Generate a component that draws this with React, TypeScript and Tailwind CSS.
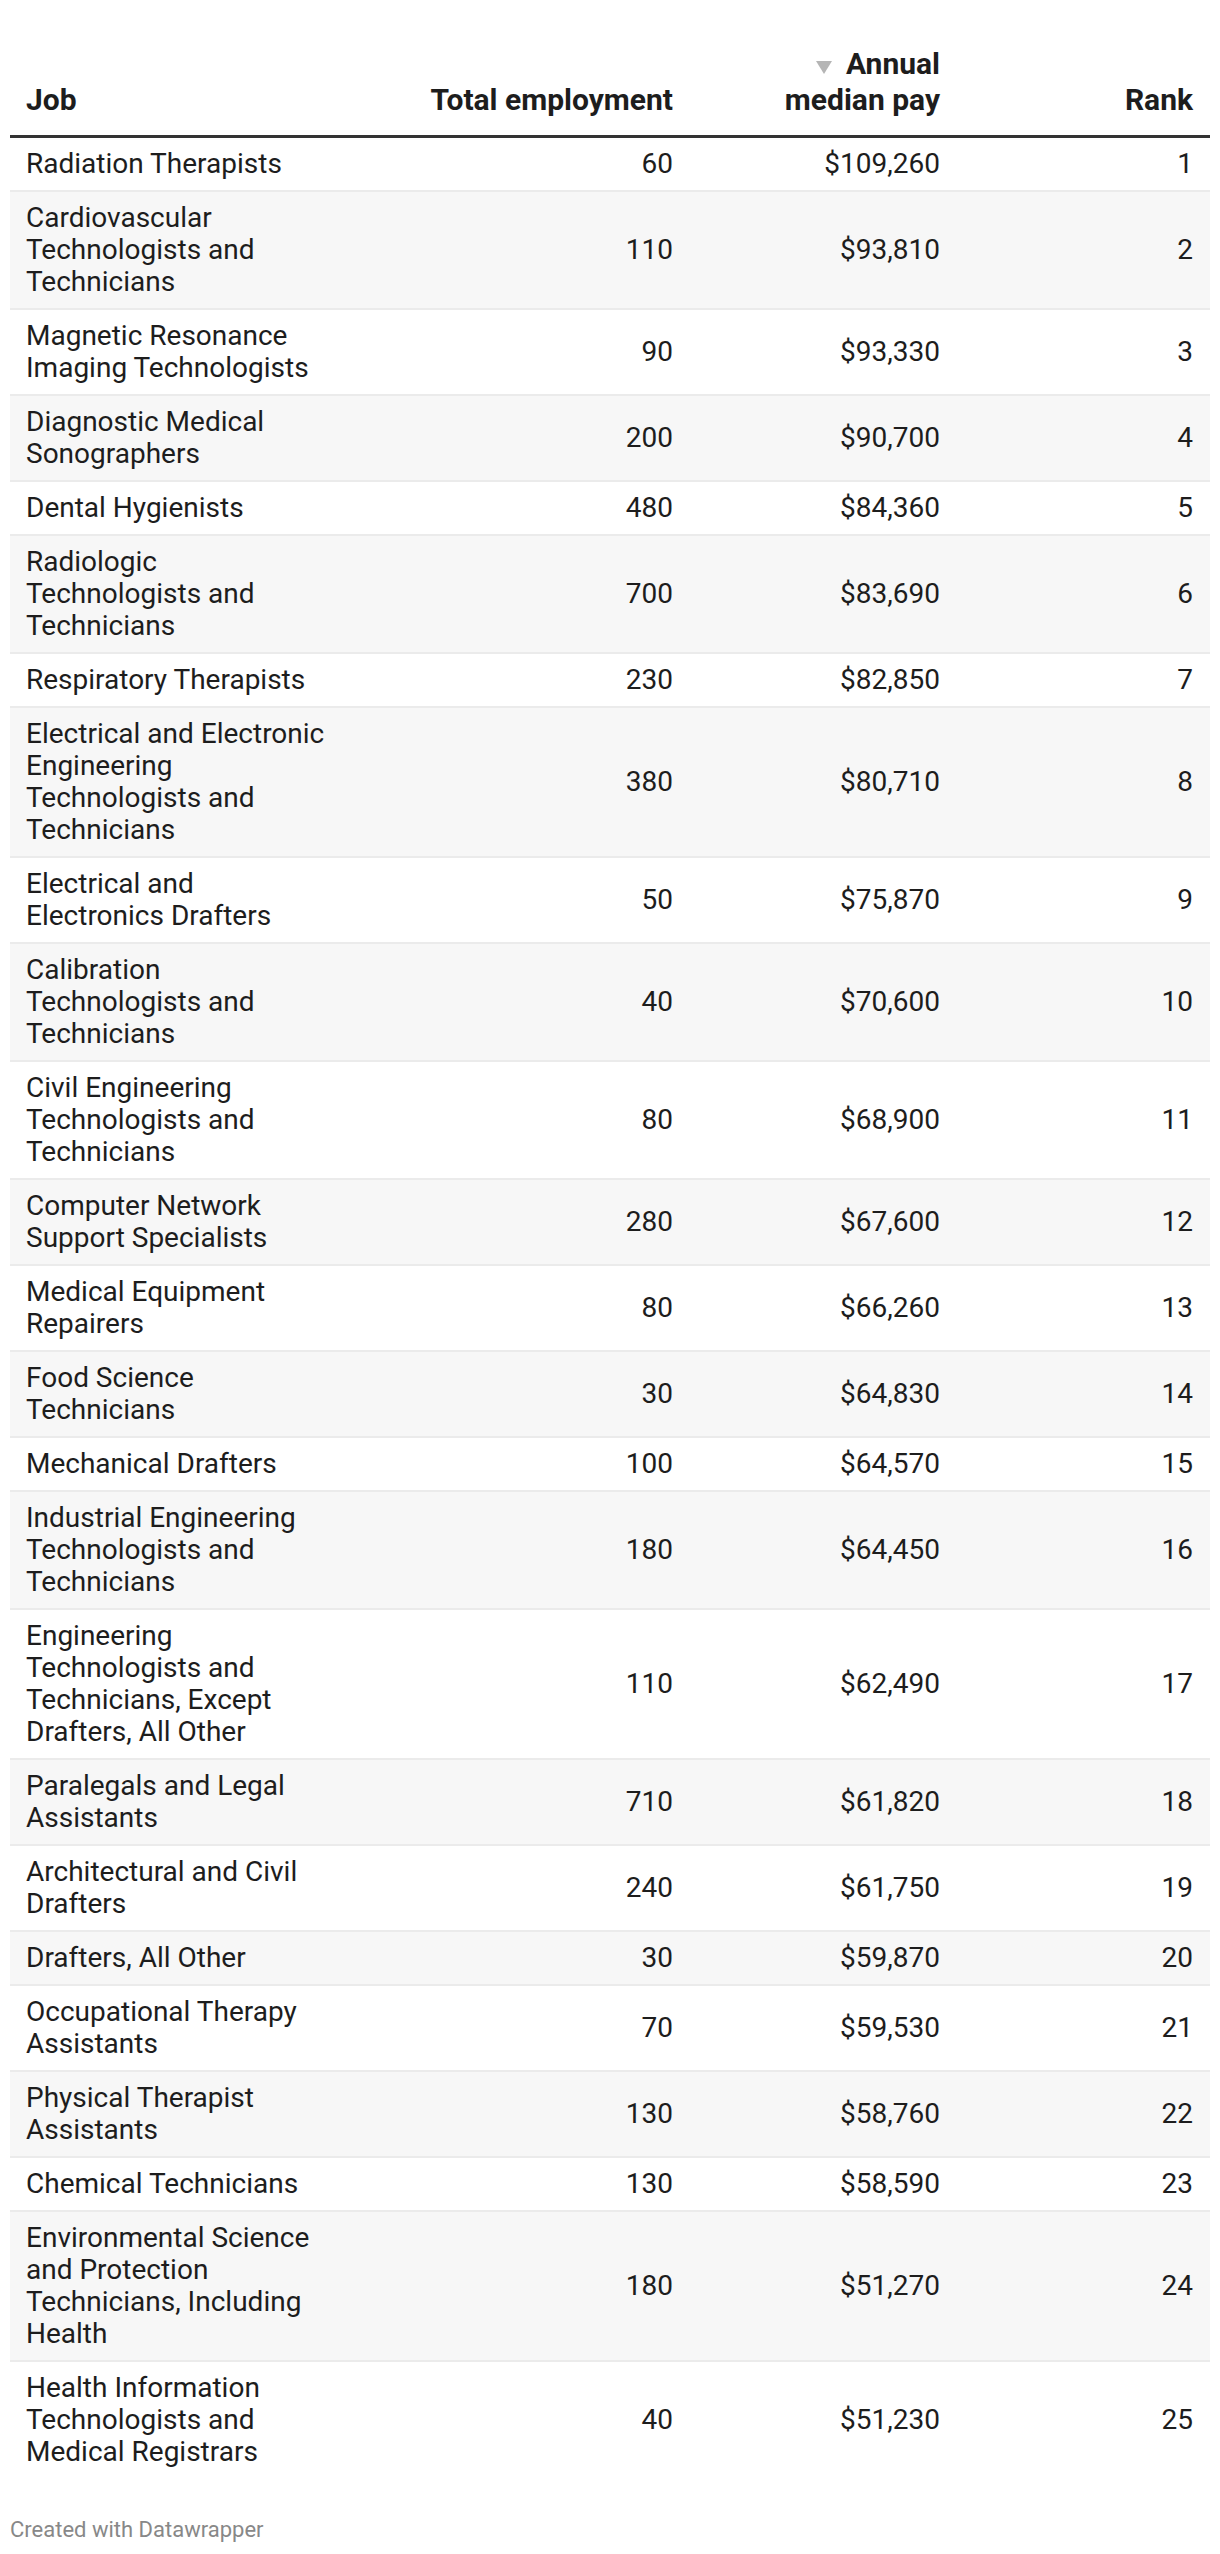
import React from "react";

type Row = { job: string[]; emp: string; pay: string; rank: string };

const rows: Row[] = [
  { job: ["Radiation Therapists"], emp: "60", pay: "$109,260", rank: "1" },
  { job: ["Cardiovascular", "Technologists and", "Technicians"], emp: "110", pay: "$93,810", rank: "2" },
  { job: ["Magnetic Resonance", "Imaging Technologists"], emp: "90", pay: "$93,330", rank: "3" },
  { job: ["Diagnostic Medical", "Sonographers"], emp: "200", pay: "$90,700", rank: "4" },
  { job: ["Dental Hygienists"], emp: "480", pay: "$84,360", rank: "5" },
  { job: ["Radiologic", "Technologists and", "Technicians"], emp: "700", pay: "$83,690", rank: "6" },
  { job: ["Respiratory Therapists"], emp: "230", pay: "$82,850", rank: "7" },
  { job: ["Electrical and Electronic", "Engineering", "Technologists and", "Technicians"], emp: "380", pay: "$80,710", rank: "8" },
  { job: ["Electrical and", "Electronics Drafters"], emp: "50", pay: "$75,870", rank: "9" },
  { job: ["Calibration", "Technologists and", "Technicians"], emp: "40", pay: "$70,600", rank: "10" },
  { job: ["Civil Engineering", "Technologists and", "Technicians"], emp: "80", pay: "$68,900", rank: "11" },
  { job: ["Computer Network", "Support Specialists"], emp: "280", pay: "$67,600", rank: "12" },
  { job: ["Medical Equipment", "Repairers"], emp: "80", pay: "$66,260", rank: "13" },
  { job: ["Food Science", "Technicians"], emp: "30", pay: "$64,830", rank: "14" },
  { job: ["Mechanical Drafters"], emp: "100", pay: "$64,570", rank: "15" },
  { job: ["Industrial Engineering", "Technologists and", "Technicians"], emp: "180", pay: "$64,450", rank: "16" },
  { job: ["Engineering", "Technologists and", "Technicians, Except", "Drafters, All Other"], emp: "110", pay: "$62,490", rank: "17" },
  { job: ["Paralegals and Legal", "Assistants"], emp: "710", pay: "$61,820", rank: "18" },
  { job: ["Architectural and Civil", "Drafters"], emp: "240", pay: "$61,750", rank: "19" },
  { job: ["Drafters, All Other"], emp: "30", pay: "$59,870", rank: "20" },
  { job: ["Occupational Therapy", "Assistants"], emp: "70", pay: "$59,530", rank: "21" },
  { job: ["Physical Therapist", "Assistants"], emp: "130", pay: "$58,760", rank: "22" },
  { job: ["Chemical Technicians"], emp: "130", pay: "$58,590", rank: "23" },
  { job: ["Environmental Science", "and Protection", "Technicians, Including", "Health"], emp: "180", pay: "$51,270", rank: "24" },
  { job: ["Health Information", "Technologists and", "Medical Registrars"], emp: "40", pay: "$51,230", rank: "25" },
];

export default function App() {
  return (
    <div
      className="bg-white text-[#1d1d1d] px-[10px] pt-[46px] pb-[10px]"
      style={{ fontFamily: "Roboto, 'Liberation Sans', sans-serif" }}
    >
      {/* Header */}
      <div className="flex items-end border-b-[3px] border-[#333333] font-bold text-[30px] leading-[36px]">
        <div className="flex-1 pl-[16px] pb-[17px]">Job</div>
        <div className="w-[290px] shrink-0 text-right pr-[17px] pb-[17px] whitespace-nowrap">Total employment</div>
        <div className="w-[267px] shrink-0 text-right pr-[17px] pb-[17px]">
          <div className="whitespace-nowrap">
            <svg
              width="16"
              height="13"
              viewBox="0 0 16 13"
              className="inline-block mr-[14px] align-baseline"
            >
              <polygon points="0,0 16,0 8,13" fill="#b5b5b5" />
            </svg>
            Annual
          </div>
          <div className="whitespace-nowrap">median pay</div>
        </div>
        <div className="w-[253px] shrink-0 text-right pr-[17px] pb-[17px]">Rank</div>
      </div>

      {/* Body */}
      <div className="text-[28px] leading-[32px]">
        {rows.map((r, i) => (
          <div
            key={r.rank}
            className={
              "flex items-center py-[10px] " +
              (i % 2 === 1 ? "bg-[#f7f7f7] " : "bg-white ") +
              (i < rows.length - 1 ? "border-b-2 border-[#ebebeb]" : "")
            }
          >
            <div className="flex-1 pl-[16px]">
              {r.job.map((l) => (
                <div key={l} className="whitespace-nowrap">
                  {l}
                </div>
              ))}
            </div>
            <div className="w-[290px] shrink-0 text-right pr-[17px]">{r.emp}</div>
            <div className="w-[267px] shrink-0 text-right pr-[17px]">{r.pay}</div>
            <div className="w-[253px] shrink-0 text-right pr-[17px]">{r.rank}</div>
          </div>
        ))}
      </div>

      {/* Footer */}
      <div className="mt-[40px] text-[22px] leading-[24px] text-[#888888]">Created with Datawrapper</div>
    </div>
  );
}
